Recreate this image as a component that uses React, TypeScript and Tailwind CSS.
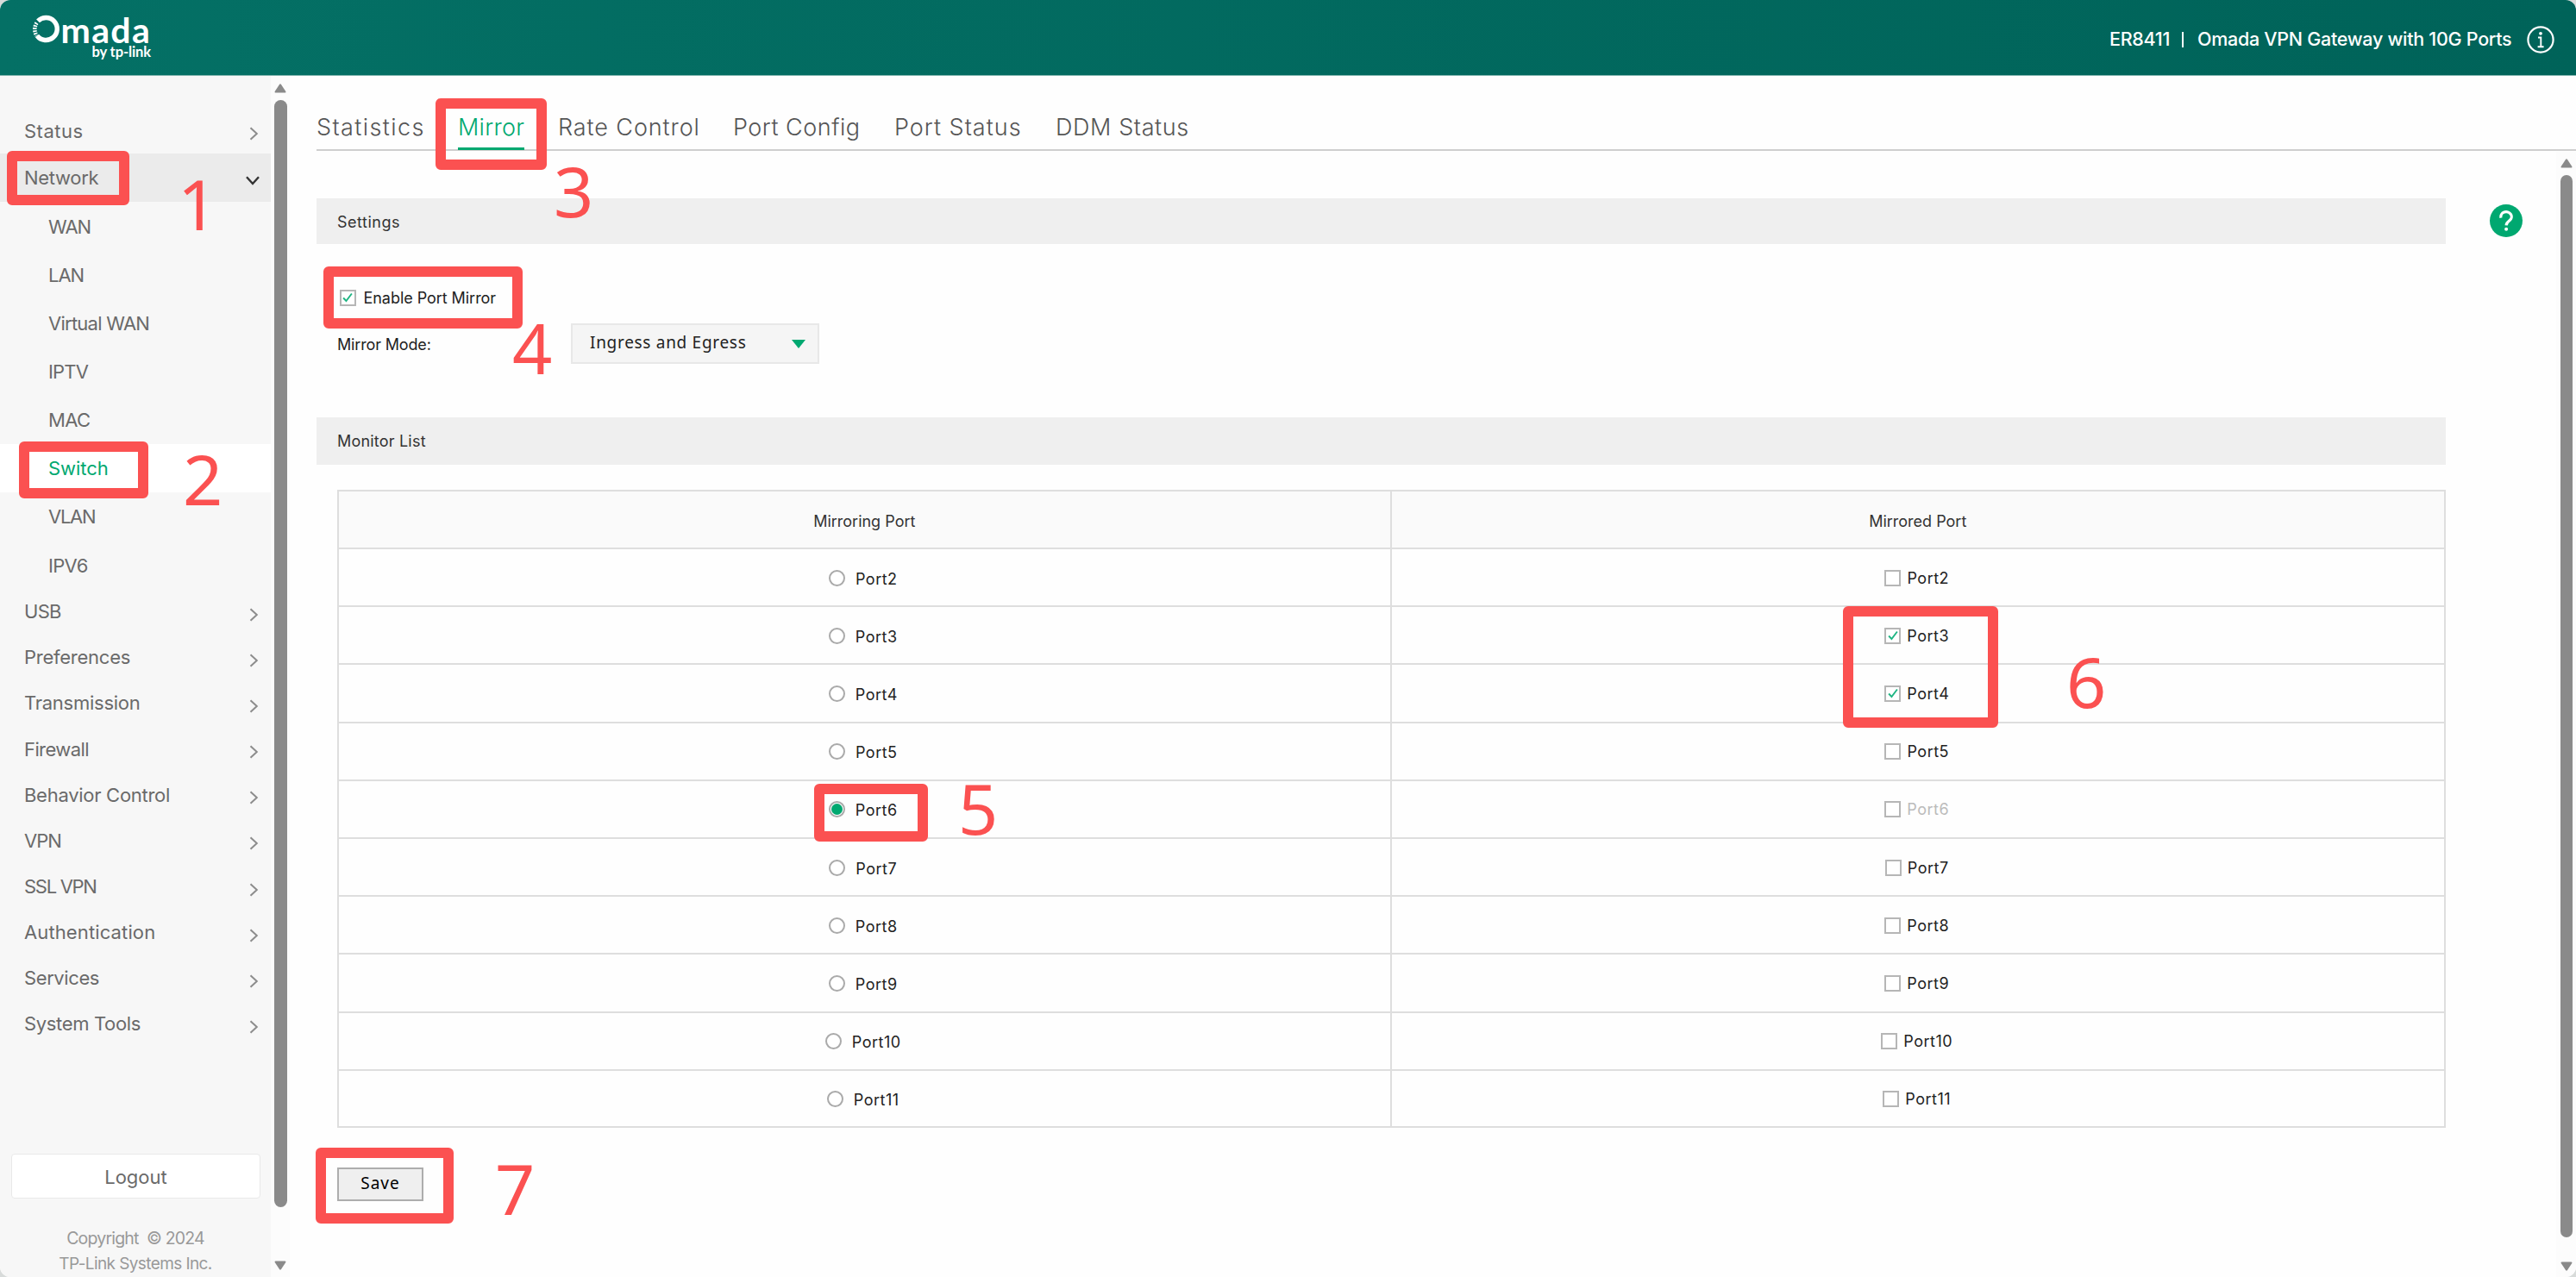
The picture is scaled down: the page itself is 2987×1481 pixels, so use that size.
type NavItem = { label: string; tracking: string };

const networkItems: NavItem[] = [
  { label: "WAN", tracking: "tracking-[-1px]" },
  { label: "LAN", tracking: "tracking-[-1px]" },
  { label: "Virtual WAN", tracking: "tracking-[-0.75px]" },
  { label: "IPTV", tracking: "tracking-[-0.8px]" },
  { label: "MAC", tracking: "tracking-[-0.7px]" },
  { label: "Switch", tracking: "tracking-[-0.05px]" },
  { label: "VLAN", tracking: "tracking-[-1.3px]" },
  { label: "IPV6", tracking: "tracking-[-0.7px]" },
];

const menuItems: NavItem[] = [
  { label: "USB", tracking: "tracking-[-0.7px]" },
  { label: "Preferences", tracking: "tracking-[-0.25px]" },
  { label: "Transmission", tracking: "tracking-[-0.25px]" },
  { label: "Firewall", tracking: "tracking-[-0.6px]" },
  { label: "Behavior Control", tracking: "tracking-[-0.28px]" },
  { label: "VPN", tracking: "tracking-[-1px]" },
  { label: "SSL VPN", tracking: "tracking-[-1.3px]" },
  { label: "Authentication", tracking: "tracking-[0.12px]" },
  { label: "Services", tracking: "tracking-[-0.4px]" },
  { label: "System Tools", tracking: "tracking-[-0.35px]" },
];

const tabs = [
  { label: "Statistics", style: "w-[164px] tracking-[1.4px]" },
  { label: "Mirror", style: "w-[116px] tracking-[0.3px]" },
  { label: "Rate Control", style: "w-[203px] tracking-[0.9px]" },
  { label: "Port Config", style: "w-[187px] tracking-[0.5px]" },
  { label: "Port Status", style: "w-[187px] tracking-[1px]" },
  { label: "DDM Status", style: "tracking-[0.6px]" },
];

const ports = [2, 3, 4, 5, 6, 7, 8, 9, 10, 11];
const mirroringPort = 6;
const mirroredPorts = [3, 4];

// Step markers drawn over the page
const boxes = [
  "left-[8px] top-[175px] w-[142px] h-[63px]",
  "left-[22px] top-[512px] w-[150px] h-[66px]",
  "left-[505px] top-[114px] w-[129px] h-[83px]",
  "left-[375px] top-[309px] w-[231px] h-[72px]",
  "left-[944px] top-[909px] w-[132px] h-[67px]",
  "left-[2137px] top-[703px] w-[180px] h-[141px]",
  "left-[366px] top-[1331px] w-[160px] h-[88px]",
];

const steps = [
  "left-[206px] top-[207px]",
  "left-[212px] top-[526px]",
  "left-[642px] top-[192px]",
  "left-[594px] top-[374px]",
  "left-[1111px] top-[908px]",
  "left-[2396px] top-[761px]",
  "left-[574px] top-[1349px]",
];

function ChevronRight() {
  return (
    <svg className="w-[11px] h-4 mr-[14px] mt-[6px]" viewBox="0 0 11 16" fill="none" stroke="#8c8c8c" strokeWidth="2">
      <path d="M1.5 1.2 L8.8 8 L1.5 14.8" />
    </svg>
  );
}

function Scrollbar({ thumb }: { thumb: string }) {
  return (
    <div className="flex flex-col items-center h-full bg-[#fcfcfc]">
      <svg className="w-[14px] h-[11px] shrink-0" viewBox="0 0 14 11" fill="#8a8a8a">
        <path d="M6 1 Q7 -0.3 8 1 L13.3 9 Q13.8 10.5 12.3 10.5 L1.7 10.5 Q0.2 10.5 0.7 9 Z" />
      </svg>
      <div className={"rounded-full bg-[#8a8a8a] " + thumb} />
      <svg className="w-[14px] h-[11px] shrink-0 mt-auto" viewBox="0 0 14 11" fill="#8a8a8a">
        <path d="M6 10 Q7 11.3 8 10 L13.3 2 Q13.8 0.5 12.3 0.5 L1.7 0.5 Q0.2 0.5 0.7 2 Z" />
      </svg>
    </div>
  );
}

function Checkbox({ checked }: { checked?: boolean }) {
  return (
    <span className="flex items-center justify-center w-[19px] h-[19px] border-2 border-[#b6b6b6] bg-white shrink-0">
      {checked && (
        <svg className="w-3 h-3" viewBox="0 0 13 13" fill="none" stroke="#1fb583" strokeWidth="2.1">
          <path d="M1.2 7 L4.8 10.8 L11.8 1.6" />
        </svg>
      )}
    </span>
  );
}

function Radio({ checked }: { checked?: boolean }) {
  return (
    <span className="flex items-center justify-center w-[19px] h-[19px] rounded-full border-2 border-[#aaa] bg-white shrink-0">
      {checked && <span className="w-[13px] h-[13px] rounded-full bg-[#00a870] shrink-0" />}
    </span>
  );
}

function Header() {
  return (
    <header className="flex justify-between h-[88px] shrink-0 border-b border-[#7fb3ad] bg-linear-to-r from-[#047065] to-[#006359] text-white">
      <div className="flex pl-[37px] pt-[17px]">
        <svg className="w-[34px] h-[34px]" viewBox="0 0 34 34" fill="none" stroke="white">
          <path d="M7 7.4 A13 13 0 1 1 6 24.5" strokeWidth="5.4" />
          <path d="M5.6 9.6 A13.2 13.2 0 0 0 5.6 24.4" strokeWidth="4.6" strokeDasharray="1.8 1.2" />
        </svg>
        <div className="flex flex-col items-end w-[104px] font-['Lato'] font-bold whitespace-nowrap">
          <span className="text-[41px] leading-[35px] tracking-[1.3px]">mada</span>
          <span className="text-[16.5px] leading-[17px] tracking-[-0.1px]">by tp-link</span>
        </div>
      </div>
      <div className="flex items-center h-[91px] pr-[25px] text-[21.5px] font-medium">
        <span className="w-[84px] tracking-[-0.3px]">ER8411</span>
        <span className="w-[2px] h-[18px] mr-[16px] bg-white" />
        <span className="w-[382px] tracking-[-0.28px] whitespace-nowrap">Omada VPN Gateway with 10G Ports</span>
        <svg className="w-8 h-8" viewBox="0 0 32 32" fill="none" stroke="white" strokeWidth="2.2">
          <circle cx="16" cy="16" r="14.6" />
          <circle cx="16" cy="8.8" r="1.9" fill="white" stroke="none" />
          <path d="M13 13.5 H16.3 V24 M12.6 24.3 H19.6" strokeWidth="1.9" />
        </svg>
      </div>
    </header>
  );
}

function Sidebar() {
  return (
    <aside className="flex flex-col w-[314px] shrink-0 bg-[#f7f7f7] text-[22px] text-[#6a6a6a]">
      <div className="flex items-center justify-between h-[53px] mt-[37px] pl-7">
        <span className="tracking-[0.5px] pt-[2px]">Status</span>
        <ChevronRight />
      </div>
      <div className="flex items-center justify-between h-14 pl-7 bg-[#ebebeb]">
        <span className="tracking-[-0.3px]">Network</span>
        <svg className="w-4 h-[11px] mr-[13px] mt-[6px]" viewBox="0 0 16 11" fill="none" stroke="#333" strokeWidth="2.4">
          <path d="M1 1.2 L8 9 L15 1.2" />
        </svg>
      </div>
      {networkItems.map((item) => (
        <div
          key={item.label}
          className={"flex items-center h-[56.15px] pl-14 pt-[2px] " + (item.label === "Switch" ? "bg-white text-[#00a870]" : "")}
        >
          <span className={item.tracking}>{item.label}</span>
        </div>
      ))}
      {menuItems.map((item) => (
        <div key={item.label} className="flex items-center justify-between h-[53.15px] pl-7">
          <span className={item.tracking}>{item.label}</span>
          <ChevronRight />
        </div>
      ))}
      <button className="h-[52px] mt-[123px] ml-[13px] mr-[12px] border border-[#e9e9e9] rounded-sm bg-white pt-[3px]">
        Logout
      </button>
      <div className="mt-[32px] text-center text-[#999] text-[19.5px] leading-[29.5px]">
        <p className="tracking-[-0.8px]">Copyright &nbsp;© 2024</p>
        <p className="text-[19px] tracking-[-0.6px]">TP-Link Systems Inc.</p>
      </div>
    </aside>
  );
}

function PortTable() {
  return (
    <div className="ml-6 mt-[29px] w-[2445px] border-2 border-[#dedede] text-[18px]">
      <div className="grid grid-cols-2 h-[67px] border-b-2 border-[#dedede] bg-[#fafafa] text-[#333]">
        <div className="flex items-center justify-center border-r-2 border-[#dedede] pt-[3px]">Mirroring Port</div>
        <div className="flex items-center justify-center pt-[3px]">Mirrored Port</div>
      </div>
      {ports.map((port) => (
        <div key={port} className="grid grid-cols-2 h-[67.2px] border-b-2 border-[#dedede] last:h-[64.5px] last:border-b-0 text-[#222]">
          <div className="flex items-center justify-center gap-[12px] border-r-2 border-[#dedede] pt-px pr-[3px]">
            <Radio checked={port === mirroringPort} />
            <span className="tracking-[0.5px] pt-[2px]">Port{port}</span>
          </div>
          <div className="flex items-center justify-center gap-[7px] pt-px pr-[2px]">
            <Checkbox checked={mirroredPorts.includes(port)} />
            <span className={"tracking-[0.5px] " + (port === mirroringPort ? "text-[#bbb]" : "")}>Port{port}</span>
          </div>
        </div>
      ))}
    </div>
  );
}

function Content() {
  return (
    <main className="flex flex-col flex-1 pl-[31px]">
      <nav className="flex h-[87px] pt-[44px] border-b-2 border-[#cfcfcf] text-[27px] leading-[32px] font-light text-[#555] whitespace-nowrap">
        {tabs.map((tab) => (
          <div key={tab.label} className={tab.style}>
            {tab.label === "Mirror" ? (
              <span className="inline-block h-[42px] border-b-[3px] border-[#00a870] text-[#00a870]">{tab.label}</span>
            ) : (
              tab.label
            )}
          </div>
        ))}
      </nav>

      <div className="flex flex-1">
        <div className="w-[2469px] shrink-0 pt-[55px] text-[18px] text-[#222]">
          <div className="h-[53px] bg-[#efefef] pl-6 leading-[56px] text-[#333] tracking-[0.5px]">Settings</div>

          <div className="flex items-center gap-[9px] mt-[51px] h-[22px] pl-[26.5px]">
            <Checkbox checked />
            <span className="tracking-[-0.05px]">Enable Port Mirror</span>
          </div>
          <div className="flex mt-[19px] pl-6">
            <label className="w-[271px] leading-[50px] tracking-[-0.15px]">Mirror Mode:</label>
            <div className="flex items-center justify-between w-[288px] h-[47px] pl-5 pr-[14px] border-2 border-[#e8e8e8] bg-[#f5f5f5] font-['Noto_Sans'] text-[19px] tracking-[0.7px] text-[#222]">
              <span className="-mt-0.5">Ingress and Egress</span>
              <svg className="w-4 h-[10px]" viewBox="0 0 16 10" fill="#00a870">
                <path d="M0 0 H16 L8 10 Z" />
              </svg>
            </div>
          </div>

          <div className="h-[55px] mt-[59px] bg-[#efefef] pl-6 leading-[56px] text-[#333] tracking-[0.2px]">Monitor List</div>

          <PortTable />

          <button className="block ml-6 mt-[46px] w-[100px] h-[39px] border-2 border-[#adadad] bg-[#efefef] font-['Noto_Sans'] text-[19px] leading-[31px] pb-[2px] tracking-[1px] text-black">
            Save
          </button>
        </div>

        <div className="flex-1 pl-[51px] pt-[62px]">
          <svg className="w-[38px] h-[38px]" viewBox="0 0 38 38" fill="none">
            <circle cx="19" cy="19" r="19" fill="#00a870" />
            <path d="M13 15.6 A6.2 5.6 0 1 1 23 18.6 C20.6 20.4 19.2 21.4 19.1 24.4" stroke="white" strokeWidth="3.2" />
            <circle cx="19.1" cy="28.8" r="2" fill="white" />
          </svg>
        </div>
        <div className="w-[23px] shrink-0 pt-px">
          <div className="h-[1305px] pt-[8px] pb-[7px] bg-[#fcfcfc]">
            <Scrollbar thumb="w-[14px] h-[1232px] mt-[8px]" />
          </div>
        </div>
      </div>
    </main>
  );
}

export default function App() {
  return (
    <div className="w-[2987px] h-[1481px] bg-[#d8dbda] font-['Inter',sans-serif]">
      <div className="relative flex flex-col w-full h-full overflow-hidden rounded-[12px] bg-[#fefefe]">
        <Header />
        <div className="flex flex-1">
          <Sidebar />
          <div className="w-[22px] shrink-0 h-[1393px] pl-px pt-[9px] pb-[8px] bg-[#fcfcfc]">
            <div className="w-[20px] h-full">
              <Scrollbar thumb="w-[15px] h-[1284px] mt-[8px]" />
            </div>
          </div>
          <Content />
        </div>

        {boxes.map((box) => (
          <div key={box} className={"absolute border-[12px] border-[#fb5151] rounded-[6px] " + box} />
        ))}
        {steps.map((step, i) => (
          <span
            key={step}
            className={"absolute flex items-center h-[58px] font-['Noto_Sans'] text-[81px] leading-[58px] text-[#fb5151] " + step}
          >
            {i + 1}
          </span>
        ))}
      </div>
    </div>
  );
}
